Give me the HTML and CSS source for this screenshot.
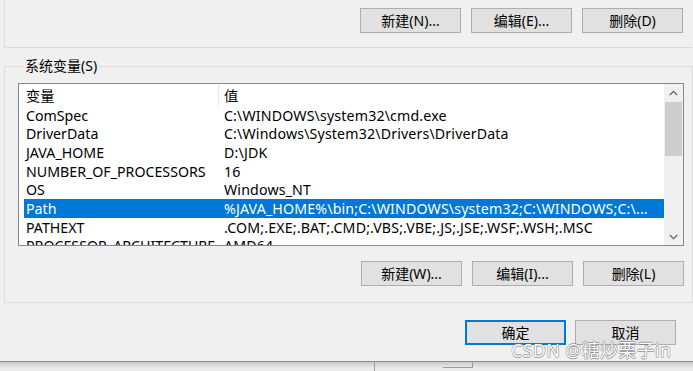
FILE: index.html
```html
<!DOCTYPE html>
<html lang="zh-CN">
<head>
  <meta charset="UTF-8">
  <meta name="viewport" content="width=device-width, initial-scale=1.0">
  <title>环境变量</title>
  <link rel="stylesheet" href="styles.css">
</head>
<body>
  <div class="dialog">
    <div class="user-group">
      <div class="btn-row">
        <button class="btn">新建(N)...</button>
        <button class="btn">编辑(E)...</button>
        <button class="btn">删除(D)</button>
      </div>
    </div>

    <fieldset class="sys-group">
      <legend>系统变量(S)</legend>
      <div class="listview">
        <div class="lv-body">
          <div class="lv-head">
            <span class="col-name">变量</span>
            <span class="col-value">值</span>
          </div>
          <div class="lv-row"><span class="col-name">ComSpec</span><span class="col-value">C:\WINDOWS\system32\cmd.exe</span></div>
          <div class="lv-row"><span class="col-name">DriverData</span><span class="col-value">C:\Windows\System32\Drivers\DriverData</span></div>
          <div class="lv-row"><span class="col-name">JAVA_HOME</span><span class="col-value">D:\JDK</span></div>
          <div class="lv-row"><span class="col-name">NUMBER_OF_PROCESSORS</span><span class="col-value">16</span></div>
          <div class="lv-row"><span class="col-name">OS</span><span class="col-value">Windows_NT</span></div>
          <div class="lv-row selected"><span class="col-name">Path</span><span class="col-value">%JAVA_HOME%\bin;C:\WINDOWS\system32;C:\WINDOWS;C:\...</span></div>
          <div class="lv-row"><span class="col-name">PATHEXT</span><span class="col-value">.COM;.EXE;.BAT;.CMD;.VBS;.VBE;.JS;.JSE;.WSF;.WSH;.MSC</span></div>
          <div class="lv-row"><span class="col-name">PROCESSOR_ARCHITECTURE</span><span class="col-value">AMD64</span></div>
        </div>
        <div class="scrollbar">
          <div class="sb-arrow">
            <svg width="9" height="6" viewBox="0 0 9 6"><path d="M0.8 5 L4.5 1.3 L8.2 5" fill="none" stroke="#606060" stroke-width="1.2"/></svg>
          </div>
          <div class="sb-track"><div class="sb-thumb"></div></div>
          <div class="sb-arrow">
            <svg width="9" height="6" viewBox="0 0 9 6"><path d="M0.8 1 L4.5 4.7 L8.2 1" fill="none" stroke="#606060" stroke-width="1.2"/></svg>
          </div>
        </div>
      </div>
      <div class="btn-row lower">
        <button class="btn">新建(W)...</button>
        <button class="btn">编辑(I)...</button>
        <button class="btn">删除(L)</button>
      </div>
    </fieldset>

    <div class="dialog-actions">
      <button class="btn default">确定</button>
      <button class="btn">取消</button>
    </div>

    <div class="watermark">CSDN @糖炒栗子in</div>
  </div>

  <div class="under">
    <div class="under-pane"></div>
    <div class="under-box"></div>
  </div>
</body>
</html>
```

FILE: styles.css
```css
body {
  margin: 0;
  width: 693px;
  height: 371px;
  overflow: hidden;
  background-color: #f0f0f0;
  font-family: "Noto Sans", "Noto Sans CJK SC", sans-serif;
  font-size: 14px;
  color: #000;
}

.dialog {
  position: relative;
  height: 361px;
  border-bottom: 1px solid #8c8c8c;
}

/* upper group (user variables), top cut off */
.user-group {
  margin-left: 4px;
  width: 688px;
  height: 48px;
  border-left: 1px solid #dcdcdc;
  border-bottom: 1px solid #dcdcdc;
  box-sizing: border-box;
  padding: 8px 9px 0 0;
}

.btn-row {
  display: flex;
  justify-content: flex-end;
  gap: 10px;
}

.btn {
  width: 101px;
  height: 25px;
  padding: 0;
  background-color: #e1e1e1;
  border: 1px solid #adadad;
  font-family: "Noto Sans", "Noto Sans CJK SC", sans-serif;
  font-size: 14px;
  color: #000;
  line-height: 1;
}

.btn.default {
  border: 2px solid #0078d7;
}

/* system variables group */
.sys-group {
  margin: 9px 0 0 4px;
  width: 689px;
  box-sizing: border-box;
  border: 1px solid #dcdcdc;
  padding: 8px 8px 16px 13px;
}

.sys-group legend {
  padding: 0 1px;
  margin-left: 6px;
  line-height: 18px;
}

.listview {
  display: flex;
  width: 666px;
  height: 163px;
  box-sizing: border-box;
  border: 1px solid #828790;
  background: #fff;
  font-size: 14.2px;
}

.lv-body {
  flex: 1;
  overflow: hidden;
  padding-left: 5px;
}

.lv-head,
.lv-row {
  display: flex;
  align-items: center;
  white-space: nowrap;
}

.lv-head {
  height: 22px;
}

.lv-row {
  height: 18.67px;
}

.col-name {
  width: 194px;
  flex: none;
  padding-left: 2px;
  box-sizing: border-box;
  overflow: hidden;
}

.col-value {
  padding-left: 6px;
  letter-spacing: 0.15px;
}

.lv-head .col-value {
  align-self: stretch;
  display: flex;
  align-items: center;
  border-left: 1px solid #e5e5e5;
  padding-left: 5px;
}

.lv-row.selected {
  background-color: #0078d7;
  color: #fff;
}

.scrollbar {
  width: 19px;
  flex: none;
  display: flex;
  flex-direction: column;
  background: #f0f0f0;
}

.sb-arrow {
  height: 17px;
  display: flex;
  align-items: center;
  justify-content: center;
}

.sb-track {
  flex: 1;
  padding: 1px 1px 0 1px;
}

.sb-thumb {
  height: 54px;
  background: #cdcdcd;
}

.btn-row.lower {
  margin-top: 15px;
}

.dialog-actions {
  display: flex;
  justify-content: flex-end;
  gap: 9px;
  margin: 17px 17px 0 0;
}

.watermark {
  position: absolute;
  left: 511px;
  top: 336px;
  font-family: "Noto Sans", "Noto Sans CJK SC", sans-serif;
  font-size: 18px;
  letter-spacing: 0.3px;
  color: #fdfdfd;
  text-shadow: 0.6px 0 rgba(110, 110, 110, 0.6), -0.6px 0 rgba(110, 110, 110, 0.6),
    0 0.6px rgba(110, 110, 110, 0.6), 0 -0.6px rgba(110, 110, 110, 0.6);
  white-space: nowrap;
}

/* window behind the dialog */
.under {
  display: flex;
  height: 9px;
  background: linear-gradient(#c9c9c9, #ebebeb 70%);
}

.under-pane {
  margin-left: 374px;
  width: 68px;
  border-left: 1px solid #a0a0a0;
}

.under-box {
  width: 29px;
  height: 5px;
  border-right: 1px solid #9a9a9a;
  border-bottom: 1px solid #9a9a9a;
}
```
